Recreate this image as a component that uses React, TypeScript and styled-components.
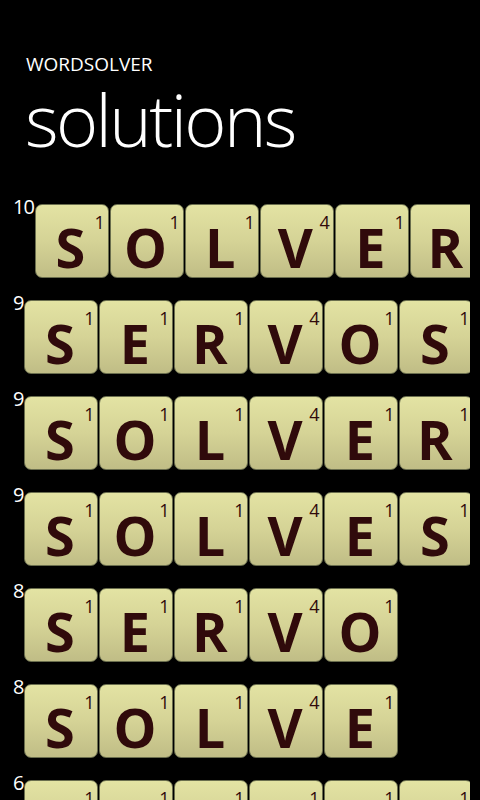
import React from "react";
import styled, { createGlobalStyle } from "styled-components";

const GlobalStyle = createGlobalStyle`
  html, body {
    margin: 0;
    padding: 0;
    background: #000;
    overflow: hidden;
  }
  body {
    font-family: "Open Sans", "Liberation Sans", sans-serif;
    color: #fff;
  }
`;

const Page = styled.div`
  width: 480px;
  height: 800px;
  background: #000;
  overflow: hidden;
  padding-top: 55px;
  box-sizing: border-box;
`;

const AppTitle = styled.div`
  font-family: "Open Sans", sans-serif;
  font-size: 19px;
  line-height: 1;
  font-weight: 400;
  margin-left: 26px;
`;

const PageTitle = styled.h1`
  margin: 9px 0 0 25px;
  font-family: "Open Sans", sans-serif;
  font-weight: 300;
  font-size: 72px;
  line-height: 1;
  letter-spacing: -2.6px;
`;

const List = styled.div`
  margin-top: 42px;
  margin-left: 13px;
  width: 457px;
  overflow: hidden;
  display: flex;
  flex-direction: column;
  gap: 15px;
`;

const Row = styled.div`
  display: flex;
  align-items: flex-start;
  white-space: nowrap;
`;

const Score = styled.span`
  font-family: "Open Sans", sans-serif;
  font-size: 20px;
  line-height: 1;
  letter-spacing: -1px;
  color: #fff;
  flex-shrink: 0;
  padding-right: 1px;
`;

const Tiles = styled.div`
  display: flex;
  gap: 1px;
  margin-top: 7px;
  flex-shrink: 0;
`;

const Tile = styled.div`
  position: relative;
  width: 74px;
  height: 74px;
  box-sizing: border-box;
  flex-shrink: 0;
  border: 1px solid #6a6e4e;
  border-radius: 7px;
  background: linear-gradient(180deg, #e3e3a3 0%, #d5d396 50%, #c0bd86 100%);
  padding: 15px 3px 0 0;
  text-align: center;
`;

const Letter = styled.span`
  display: block;
  font-family: "Open Sans", sans-serif;
  font-weight: 700;
  font-size: 54px;
  line-height: 1;
  color: #300a0b;
`;

const Points = styled.span`
  position: absolute;
  top: 8px;
  right: 3px;
  font-family: "Open Sans", sans-serif;
  font-size: 18px;
  line-height: 1;
  color: #300a0b;
`;

const values: Record<string, number> = {
  S: 1, O: 1, L: 1, V: 4, E: 1, R: 1,
};

const words: { word: string; score: number }[] = [
  { word: "SOLVER", score: 10 },
  { word: "SERVOS", score: 9 },
  { word: "SOLVER", score: 9 },
  { word: "SOLVES", score: 9 },
  { word: "SERVO", score: 8 },
  { word: "SOLVE", score: 8 },
  { word: "LOSERS", score: 6 },
];

export default function App() {
  return (
    <>
      <GlobalStyle />
      <Page>
        <AppTitle>WORDSOLVER</AppTitle>
        <PageTitle>solutions</PageTitle>
        <List>
          {words.map((w, i) => (
            <Row key={i}>
              <Score>{w.score}</Score>
              <Tiles>
                {w.word.split("").map((ch, j) => (
                  <Tile key={j}>
                    <Letter>{ch}</Letter>
                    <Points>{values[ch] ?? 1}</Points>
                  </Tile>
                ))}
              </Tiles>
            </Row>
          ))}
        </List>
      </Page>
    </>
  );
}
